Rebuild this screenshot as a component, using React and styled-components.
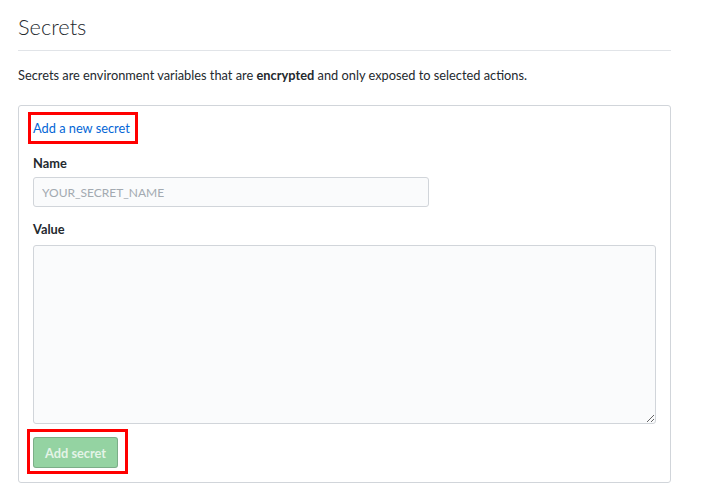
import styled, { createGlobalStyle } from "styled-components";

const GlobalStyle = createGlobalStyle`
  body {
    margin: 0;
    background: #ffffff;
    font-family: Lato, "Noto Sans", sans-serif;
    color: #24292e;
  }
`;

export default function App() {
  return (
    <>
      <GlobalStyle />
      <Page>
        <Header>
          <Title>Secrets</Title>
        </Header>
        <Intro>
          Secrets are environment variables that are <strong>encrypted</strong>{" "}
          and only exposed to selected actions.
        </Intro>
        <Box>
          <Marked>
            <Link href="#">Add a new secret</Link>
          </Marked>
          <Field>
            <Label>Name</Label>
            <Input placeholder="YOUR_SECRET_NAME" />
          </Field>
          <Field>
            <Label>Value</Label>
            <TextArea />
          </Field>
          <ButtonMark>
            <Button disabled>Add secret</Button>
          </ButtonMark>
        </Box>
      </Page>
    </>
  );
}

const Page = styled.div`
  width: 653px;
  padding: 0 18px;
`;

const Header = styled.div`
  padding-top: 12px;
  padding-bottom: 8px;
  border-bottom: 1px solid #e1e4e8;
`;

const Title = styled.h2`
  margin: 0;
  font-size: 21.8px;
  font-weight: 300;
  line-height: 30px;
`;

const Intro = styled.p`
  margin: 14px 0 20px;
  font-size: 12.8px;
  line-height: 20px;

  strong {
    font-weight: 700;
  }
`;

const Box = styled.div`
  border: 1px solid #d1d5da;
  border-radius: 3px;
  padding: 6px 14px 8px;
  display: flex;
  flex-direction: column;
  align-items: flex-start;
`;

const Marked = styled.div`
  border: 3px solid #f00;
  padding: 4px 5px 4px 2px;
  margin-left: -5px;
`;

const Link = styled.a`
  font-size: 12.8px;
  line-height: 18px;
  color: #0366d6;
  text-decoration: none;
  display: block;
`;

const Field = styled.div`
  margin-top: 10px;
  display: flex;
  flex-direction: column;
  width: 100%;

  & + & {
    margin-top: 13px;
  }
`;

const Label = styled.label`
  font-size: 12.8px;
  font-weight: 700;
  line-height: 18px;
  margin-bottom: 5px;

  ${Field} + ${Field} & {
    margin-bottom: 7px;
  }
`;

const Input = styled.input`
  box-sizing: border-box;
  width: 396px;
  height: 30px;
  padding: 0 8px;
  font-family: inherit;
  font-size: 12px;
  background: #fafbfc;
  border: 1px solid #d1d5da;
  border-radius: 3px;
  outline: none;

  &::placeholder {
    color: #a3aab1;
  }
`;

const TextArea = styled.textarea`
  box-sizing: border-box;
  width: 100%;
  height: 179px;
  background: #fafbfc;
  border: 1px solid #d1d5da;
  border-radius: 3px;
  outline: none;
  resize: vertical;
`;

const ButtonMark = styled.div`
  margin-top: 5px;
  margin-left: -6px;
  border: 3px solid #f00;
  padding: 5px 7px 3px 3px;
`;

const Button = styled.button`
  box-sizing: border-box;
  height: 31px;
  padding: 0 11px;
  font-family: inherit;
  font-size: 12.8px;
  font-weight: 700;
  color: rgba(255, 255, 255, 0.75);
  background: #94d3a2;
  border: 1px solid rgba(27, 31, 35, 0.2);
  border-radius: 3px;
`;
